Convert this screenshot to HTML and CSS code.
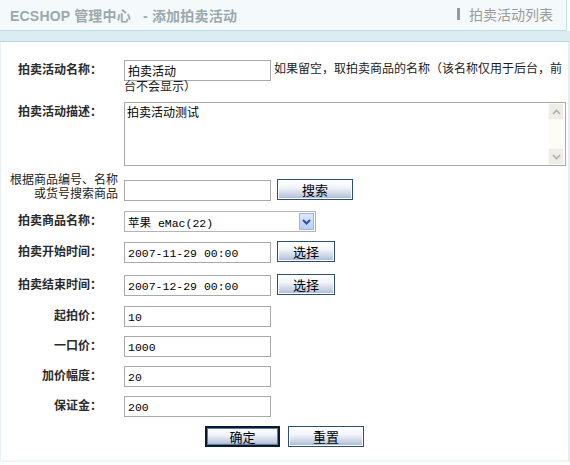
FILE: index.html
```html
<!DOCTYPE html>
<html lang="zh-CN">
<head>
<meta charset="utf-8">
<title>添加拍卖活动</title>
<link rel="stylesheet" href="styles.css">
</head>
<body>
<div class="page">
  <div class="topbar">
    <h1 class="title">ECSHOP 管理中心<span class="sub">- 添加拍卖活动</span></h1>
    <a class="action" href="#">拍卖活动列表</a>
  </div>
  <div class="band"></div>

  <form class="main">
    <div class="row row-name">
      <div class="label">拍卖活动名称：</div>
      <div class="field note-field"><span class="input w146 cjk">拍卖活动</span>如果留空，取拍卖商品的名称（该名称仅用于后台，前台不会显示）</div>
    </div>

    <div class="row row-desc">
      <div class="label">拍卖活动描述：</div>
      <div class="field">
        <div class="textarea">
          <div class="textarea-text">拍卖活动测试</div>
          <div class="scrollbar">
            <span class="sb-btn"><svg width="9" height="6" viewBox="0 0 9 6"><polyline points="1,5 4.5,1.5 8,5" fill="none" stroke="#aeb0a8" stroke-width="1.6"/></svg></span>
            <span class="sb-track"></span>
            <span class="sb-btn"><svg width="9" height="6" viewBox="0 0 9 6"><polyline points="1,1 4.5,4.5 8,1" fill="none" stroke="#aeb0a8" stroke-width="1.6"/></svg></span>
          </div>
        </div>
      </div>
    </div>

    <div class="row row-search">
      <div class="label plain">根据商品编号、名称<br>或货号搜索商品</div>
      <div class="field inline"><span class="input w146"></span><button type="button" class="btn w75">搜索</button></div>
    </div>

    <div class="row row-goods">
      <div class="label">拍卖商品名称：</div>
      <div class="field">
        <div class="select">
          <span class="select-text">苹果 eMac(22)</span>
          <span class="select-arrow"><svg width="9" height="6" viewBox="0 0 9 6"><polyline points="1,1 4.5,4.5 8,1" fill="none" stroke="#2c4f9a" stroke-width="2"/></svg></span>
        </div>
      </div>
    </div>

    <div class="row row-start">
      <div class="label">拍卖开始时间：</div>
      <div class="field inline"><span class="input w146 mono">2007-11-29 00:00</span><button type="button" class="btn w58">选择</button></div>
    </div>

    <div class="row row-end">
      <div class="label">拍卖结束时间：</div>
      <div class="field inline"><span class="input w146 mono">2007-12-29 00:00</span><button type="button" class="btn w58">选择</button></div>
    </div>

    <div class="row row-price">
      <div class="label">起拍价：</div>
      <div class="field"><span class="input w146 mono">10</span></div>
    </div>

    <div class="row row-price">
      <div class="label">一口价：</div>
      <div class="field"><span class="input w146 mono">1000</span></div>
    </div>

    <div class="row row-price">
      <div class="label">加价幅度：</div>
      <div class="field"><span class="input w146 mono">20</span></div>
    </div>

    <div class="row row-price">
      <div class="label">保证金：</div>
      <div class="field"><span class="input w146 mono">200</span></div>
    </div>

    <div class="actions">
      <button type="submit" class="btn btn-ok primary">确定</button>
      <button type="reset" class="btn btn-reset">重置</button>
    </div>
  </form>
</div>
</body>
</html>
```

FILE: styles.css
```css
html, body {
  margin: 0;
  padding: 0;
  background: #ffffff;
}

body {
  font-family: "Noto Sans CJK SC", "DejaVu Sans", sans-serif;
  font-size: 12px;
  color: #111;
}

.page {
  width: 570px;
  height: 465px;
  overflow: hidden;
  box-sizing: border-box;
}

/* title bar */
.topbar {
  height: 31px;
  width: 567px;
  box-sizing: border-box;
  background: #f4f9fb;
  border-right: 1px solid #c6e1e9;
  border-bottom: 1px solid #bfdde6;
  display: flex;
  align-items: center;
  justify-content: space-between;
  padding: 0 13px 1px 10px;
}

.title {
  margin: 0;
  font-family: "Liberation Sans", "Noto Sans CJK SC", sans-serif;
  font-size: 14px;
  font-weight: bold;
  color: #9ba9ad;
  letter-spacing: 0.2px;
}

.title .sub {
  margin-left: 12px;
}

.action {
  font-size: 14px;
  color: #9c9c9c;
  text-decoration: none;
  border-left: 3px solid #999;
  padding-left: 9px;
  line-height: 12px;
  margin-bottom: 2px;
}

.band {
  height: 10px;
  background: #dcedf1;
  border-bottom: 1px solid #b8dae4;
}

/* form body */
.main {
  margin: 0;
  height: 420px;
  box-sizing: border-box;
  border-left: 1px solid #e8f2f6;
  border-right: 2px solid #e4eff3;
  border-bottom: 2px solid #eef6f9;
  width: 570px;
  padding: 18px 0 0 0;
}

.row {
  display: flex;
  align-items: flex-start;
}

.label {
  flex: none;
  width: 117px;
  box-sizing: border-box;
  text-align: right;
  font-weight: bold;
  color: #2b2b2b;
  line-height: 14px;
  padding-right: 16px;
  margin-right: 6px;
  padding-top: 2px;
}

.label.plain {
  font-weight: normal;
  padding-right: 0;
  padding-top: 0;
  margin-top: -1px;
  line-height: 14px;
  color: #222;
}

.field {
  flex: 1;
  min-width: 0;
}

.field.inline {
  display: flex;
  align-items: flex-start;
}

.input {
  display: inline-block;
  box-sizing: border-box;
  height: 21px;
  border: 1px solid #a9a9a9;
  background: #fff;
  padding: 1px 3px 0;
  line-height: 17px;
  vertical-align: top;
  white-space: nowrap;
  overflow: hidden;
}

.w146 { width: 147px; }

.mono {
  font-family: "Liberation Mono", "Noto Sans CJK SC", monospace;
  font-size: 11.5px;
  color: #000;
  padding-top: 2px;
}

.cjk { color: #000; }

/* name row: the hint wraps underneath the input */
.note-field {
  line-height: 15px;
  padding-right: 4px;
  color: #1c1c1c;
}

.note-field .input {
  margin-right: 3px;
  margin-bottom: -3px;
  vertical-align: -5px;
}

.row-name { margin-bottom: 9px; }

/* description box */
.textarea {
  width: 442px;
  height: 64px;
  box-sizing: border-box;
  border: 1px solid #a9a9a9;
  display: flex;
}

.textarea-text {
  flex: 1;
  padding: 1px 2px;
  color: #000;
  line-height: 15px;
}

.scrollbar {
  width: 16px;
  margin-right: 1px;
  display: flex;
  flex-direction: column;
  background: #fdfdf6;
}

.sb-btn {
  height: 17px;
  box-sizing: border-box;
  background: #eeeee7;
  border: 1px solid #f8f8f4;
  display: flex;
  align-items: center;
  justify-content: center;
}

.sb-track { flex: 1; }

.row-desc { margin-bottom: 7px; }

.row-search { margin-bottom: 10px; }
.row-search .field { padding-top: 7px; }

/* buttons */
.btn {
  box-sizing: border-box;
  height: 21px;
  margin-left: 6px;
  border: 1px solid #2b4c7d;
  background: linear-gradient(#ffffff 0%, #f1f4f9 40%, #c4cfe2 80%, #a6b6d2 100%);
  box-shadow: inset 0 0 0 1px #ffffff;
  font-family: "Noto Sans CJK SC", sans-serif;
  font-size: 13px;
  line-height: 17px;
  color: #000;
  padding: 0;
}

.w75 { width: 76px; margin-top: -1px; }
.w58 { width: 58px; margin-top: -1px; }

.btn-ok { width: 75px; }
.btn-reset { width: 76px; }

.btn.primary {
  border: 2px solid #0d1a2e;
  box-shadow: inset 0 0 0 1px #5c7aa8;
}

/* goods select */
.select {
  width: 192px;
  height: 21px;
  box-sizing: border-box;
  border: 1px solid #b4b4b4;
  display: flex;
  align-items: center;
  justify-content: space-between;
  padding: 0 1px 0 3px;
}

.select-text {
  font-family: "Liberation Mono", "Noto Sans CJK SC", monospace;
  font-size: 11.5px;
  color: #000;
}

.select-arrow {
  width: 15px;
  height: 17px;
  box-sizing: border-box;
  border: 1px solid #9db4ec;
  background: linear-gradient(#dde7fd, #b9cdfa);
  display: flex;
  align-items: center;
  justify-content: center;
}

.row-goods { margin-bottom: 10px; }
.row-start { margin-bottom: 12px; }
.row-end { margin-bottom: 10px; }
.row-price { margin-bottom: 9px; }

.actions {
  display: flex;
  padding-left: 204px;
  gap: 8px;
  margin-top: 0;
}

.actions .btn { margin-left: 0; }
```
